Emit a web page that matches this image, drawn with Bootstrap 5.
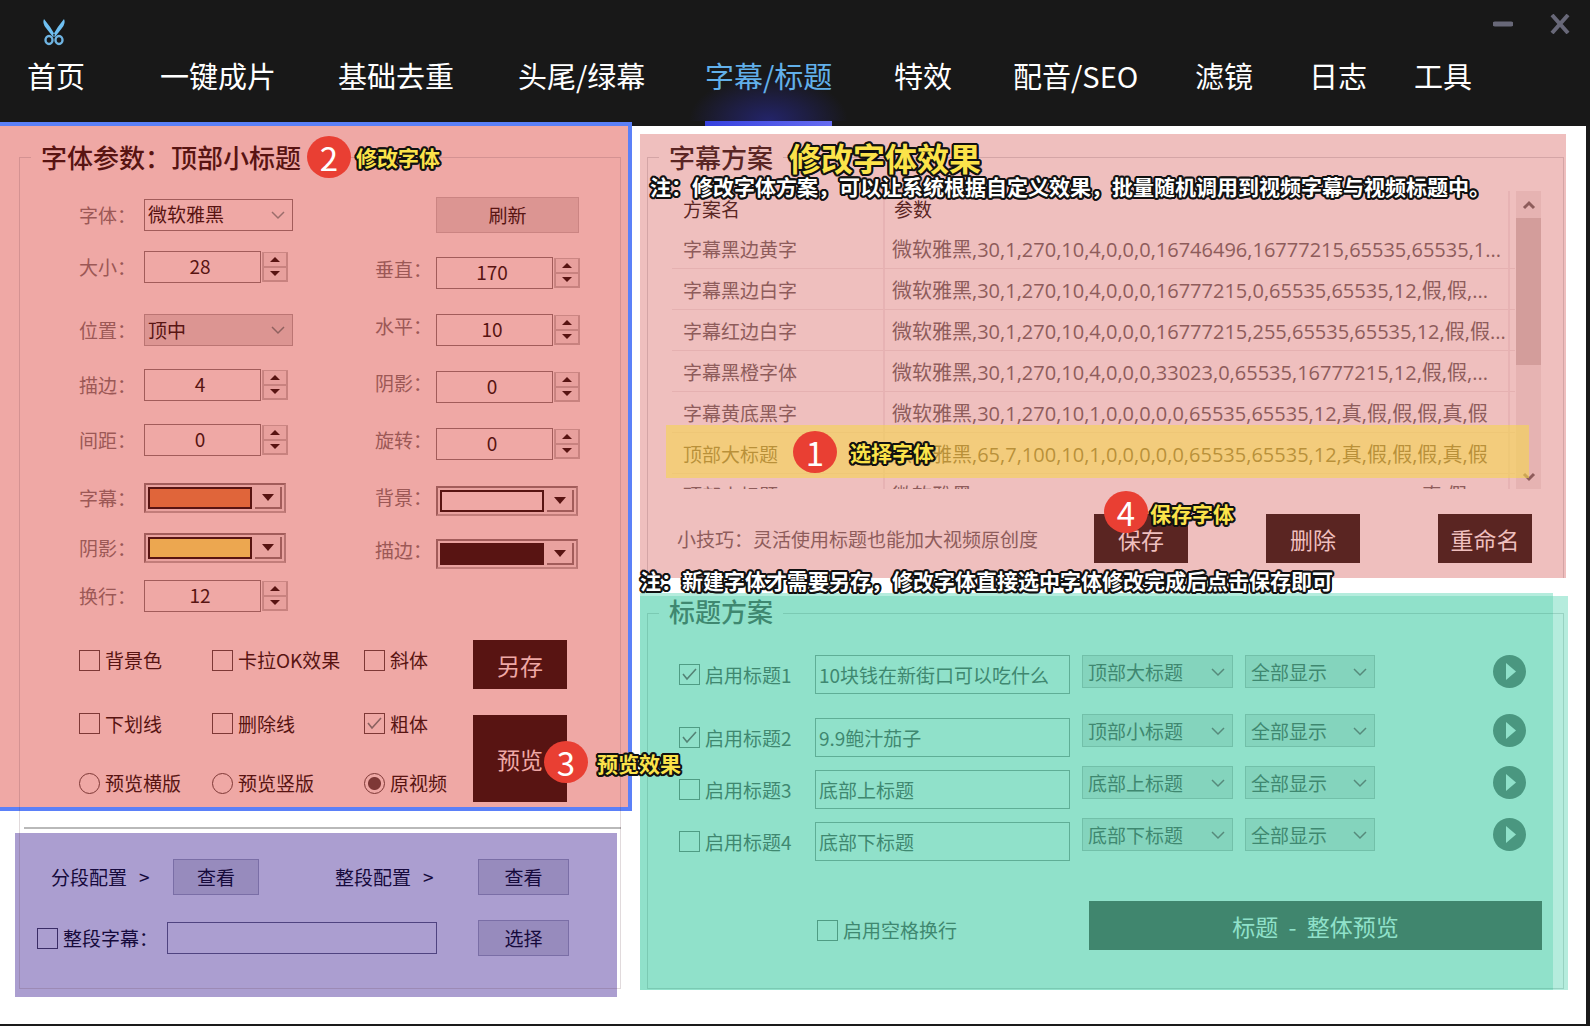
<!DOCTYPE html>
<html lang="zh-CN">
<head>
<meta charset="utf-8">
<meta name="viewport" content="width=device-width, initial-scale=1">
<title>字幕/标题</title>
<link href="https://cdn.jsdelivr.net/npm/bootstrap@5.3.0/dist/css/bootstrap.min.css" rel="stylesheet">
<style>
body{font-family:"Noto Sans CJK SC",sans-serif;font-size:19px;line-height:24px;background:#fff;color:#581412}
button,input,select{font-family:inherit;font-size:inherit;line-height:inherit;color:inherit}

/* title bar and tabs */
.topbar{background:#181818}
.titlebar{height:48px;padding:0 20px 0 42px}
.titlebar svg{display:block}
.win-btns{gap:37px}
.win-btn{border:0;background:none;padding:0}
.tabs{display:grid;grid-template-columns:133fr 178fr 180fr 187fr 189fr 119fr 182fr 114fr 105fr 176fr;padding-left:27px}
.tab-link{justify-self:start;height:78px;font-size:29px;line-height:54px;color:#fff;text-decoration:none;white-space:nowrap}
.tab-link.active{position:relative;isolation:isolate;color:#62b0ea;border-bottom:5px solid #4a52e6;border-image:linear-gradient(90deg,#3540dd,#666cf0) 1}
.tab-link.active::before{content:"";position:absolute;z-index:-1;left:-16px;right:-16px;bottom:0;height:46px;background:radial-gradient(ellipse 50% 100% at 50% 100%,#23246a 0,#1e1e42 50%,#181818 100%)}

/* window body */
.work{display:grid;grid-template-columns:632fr 954fr;border-right:4px solid #1a1a1a;border-bottom:2px solid #1a1a1a}
.pane-left,.pane-right,.zone{position:relative}
.pane-left{z-index:2}
.pane-left::before,.framed::before{content:"";position:absolute;border:1px solid rgba(90,50,60,.18);pointer-events:none}
.pane-left::before{left:19px;right:11px;top:31px;height:832px;z-index:1}
.zone-title{height:36px;font-size:26px;line-height:34px;font-weight:500;margin:0;position:relative;z-index:1;white-space:nowrap}
.zone-title b{font-weight:500;padding:0 10px;margin:0 -10px}

.zone-font{margin-top:-4px;background:#efa8a5;border:solid #5b80f8;border-width:4px 4px 4px 0;padding:13px 0 5px}
.zone-font .zone-title{padding-left:41px;gap:5px}
.zone-font .zone-title b{background:#efa8a5;margin-right:-9px}
.font-form{margin-top:24px;padding-left:79px;display:grid;grid-template-columns:296px 1fr}
.rows-a,.rows-b{display:grid;align-content:start}
.rows-a{grid-template-rows:52px 63px 55px 55px 58px 50px 48px 32px}
.rows-b{grid-template-rows:58px 57px 57px 57px 57px 53px 32px}
.field{display:flex;align-items:center;height:32px}
.field-name{width:65px;color:#9c5856}
.rows-b .field-name{width:61px;padding-bottom:8px}
.box,.pick{border:1px solid;outline:0;border-radius:0;min-width:0;padding:0 3px}
.box{background:transparent}
.pick{appearance:none;background-repeat:no-repeat;background-position:right 6px center;background-size:16px 16px;background-image:url("data:image/svg+xml,%3Csvg xmlns='http://www.w3.org/2000/svg' viewBox='0 0 16 16'%3E%3Cpath d='M2 5l6 6 6-6' fill='none' stroke='%23000' stroke-opacity='.35' stroke-width='1.5'/%3E%3C/svg%3E")}
.zone-font .box,.zone-font .pick{height:32px;border-color:#a25c5a}
.zone-font .pick{width:149px;background-color:transparent;padding-bottom:3px}
.zone-font .pick.dim{background-color:#dc9592;border-color:#bb7573;padding-bottom:0}
.zone-font .num{width:117px;text-align:center;padding:0 8px 3px 3px}
.spin{display:flex;flex-direction:column;width:26px;height:30px;margin-left:1px;border:solid #cb8683;border-width:1px 0 0 1px}
.spin button{flex:1;border:1px solid #c8827f;border-width:0 2px 2px 1px;background:#e8a09d;padding:0;display:flex;align-items:center;justify-content:center}
.tri-u,.tri-d{border:solid transparent;border-width:0 5px}
.tri-u{border-bottom:5px solid #581412}
.tri-d{border-top:5px solid #581412}
.color-pick{display:flex;width:142px;height:30px;padding:2px;background:#e9a29f;border:2px solid;border-color:#a25c5a #b87371 #c27d7a #a25c5a}
.color-pick>i{flex:1;border:2px solid #581412;margin-right:3px}
.color-pick span{width:27px;display:flex;align-items:center;justify-content:center;border:solid #a25c5a;border-width:0 2px 2px 0}
.color-pick .tri-d{border-width:7px 6px 0}
.sw-orange{background:#e0653a}.sw-amber{background:#eca750}.sw-none{background:#efa8a5}.sw-dark{background:#581412}
.flat{border:1px solid;padding:0}
.zone-font .flat{width:143px;height:36px;background:#dc9592;border-color:#cb8482}

.styles{margin-top:28px;padding-left:79px;display:flex}
.style-grid{display:grid;grid-template-columns:133px 152px 109px;grid-template-rows:40px 87px 32px;align-items:center}
.tick{display:flex;align-items:center;gap:5px;white-space:nowrap}
.tick input{appearance:none;flex:none;width:21px;height:21px;margin:0;border:1px solid #7e3836;border-radius:0;background:center/17px 17px no-repeat}
.tick input[type=radio]{border-radius:50%}
.tick input[type=radio]:checked{background:radial-gradient(circle,#7e3836 0 6px,transparent 7px)}
.tick input[type=checkbox]:checked{background-image:url("data:image/svg+xml,%3Csvg xmlns='http://www.w3.org/2000/svg' viewBox='0 0 17 17'%3E%3Cpath d='M2 8l4 5 9-10' fill='none' stroke='%23000' stroke-opacity='.42' stroke-width='1.6'/%3E%3C/svg%3E")}
.acts{display:flex;flex-direction:column;gap:26px;width:94px}
.solid{border:0;padding:0;font-size:23px;background:#581412;color:#efa8a5;height:49px;width:94px}
.acts .tall{height:87px}

.split{margin:16px 11px 4px 24px;border-top:2px solid #b9b9b9}
.zone-seg{margin:0 15px;height:164px;background:#ab9ed0;color:#160a3c;padding:26px 48px 0 22px}
.seg-row{display:flex;align-items:center;height:36px}
.seg-row + .seg-row{margin-top:25px}
.zone-seg .flat{background:#978bbd;border-color:#7a6ea6;height:36px;width:91px}
.zone-seg .flat.slim{width:86px}
.seg-a{width:122px;margin-left:14px}
.seg-b{width:143px;margin-left:76px}
.zone-seg .tick{width:130px}
.zone-seg .tick input{border-color:#3a2c66}
.zone-seg .box{flex:1;height:32px;border-color:#4f4380;margin-right:41px}

/* right pane */
.pane-right{padding:8px 18px 0 8px}
.framed::before{left:7px;right:2px}
.zone-plan{background:#efbfbe;color:#5a2624;margin-right:2px;padding:5px 25px 15px 32px}
.zone-plan.framed::before{top:23px;bottom:0;border-bottom:0}
.zone-plan .zone-title b{background:#efbfbe}
.zone-plan .zone-title,.zone-head .zone-title{margin-left:-3px}
.plan-list{position:relative;display:flex;height:298px;margin-top:16px}
.plan-scroll{flex:1;min-width:0;overflow:hidden}
.plan-table{width:100%;table-layout:fixed;border-collapse:separate;border-spacing:0;font-family:"Open Sans","Noto Sans CJK SC",sans-serif;color:#8e5c5b}
.plan-table th{height:37px;padding:0 0 0 11px;font-weight:400;font-size:19px;color:#5a2624}
.plan-table td{height:41px;padding:3px 0 0 11px;font-size:19px;white-space:nowrap;overflow:hidden;border-bottom:1px solid #e5b1b1}
.plan-table td + td{font-size:20px;padding-left:7px}
.plan-table th + th{padding-left:9px}
.plan-table th + th,.plan-table td + td{border-left:2px solid #e7b3b4}
.plan-table .is-picked{color:#5f2a18}
.c-name{width:211px}.c-end{width:7px}
.bar-track{width:25px;margin-left:1px;background:#e6b3b2;display:flex;flex-direction:column;align-items:center;padding:8px 0 6px}
.bar-thumb{width:100%;height:147px;margin:7px 0 auto;background:#d39d9b}
.picked{position:absolute;left:-6px;right:12px;top:234px;height:53px;background:rgba(245,214,80,.6)}
.plan-foot{display:flex;align-items:center;margin-top:25px;padding:0 9px 0 5px;color:#8e5c5b;white-space:nowrap}
.plan-foot .solid{background:#5a2522;color:#efbfbe}
.plan-btns{gap:78px}

.zone-head{margin-top:15px;padding:1px 26px 40px 32px;color:#3f8870;background:linear-gradient(#b5ecdd,#b5ecdd) 0 0/calc(100% - 15px) 3px no-repeat,linear-gradient(#90e1ca,#90e1ca) 0 3px/calc(100% - 15px) 100% no-repeat,linear-gradient(#b5ecdd,#b5ecdd) 100% 3px/15px 100% no-repeat}
.zone-head.framed::before{top:20px;bottom:1px;right:4px;border-color:rgba(40,110,90,.2)}
.zone-head .zone-title b{background:linear-gradient(#90e1ca,#90e1ca) 0 6px no-repeat}
.head-rows{margin:25px 16px 0 7px;display:grid;row-gap:13px}
.head-row{display:grid;grid-template-columns:124fr 255fr 151fr 130fr 139fr;column-gap:12px;align-items:start}
.head-row:first-child{margin-bottom:11px}
.head-row + .head-row .pick,.head-row + .head-row .play{margin-top:-4px}
.head-row .tick{height:39px}
.head-row .box{width:100%;height:39px;border-color:#5fae96}
.head-row .pick{width:100%;height:33px;background-color:#84d4bd;border-color:#72c0a9;padding:0 5px}
.zone-head .tick input{border-color:#4f9c84}
.play{justify-self:end;border:0;background:none;padding:0;height:33px}
.play svg{display:block}
.head-foot{display:flex;align-items:center;margin-top:40px;padding-left:145px}
.head-foot .tick{padding-top:9px}
.head-foot .solid{margin-left:auto;width:453px;background:#40866e;color:#90e1ca;white-space:pre}

/* numbered call-outs */
.pin{display:flex;align-items:center;justify-content:center;flex:none;width:44px;height:42px;border-radius:50%;background:#e93f33;color:#fff;font-size:33px;line-height:42px;font-weight:400}
.hint{font-size:21px;line-height:24px;font-weight:700;color:#fbe34a;white-space:nowrap;text-shadow:-2px 0 #111,2px 0 #111,0 -2px #111,0 2px #111,-1px -2px #111,1px -2px #111,-1px 2px #111,1px 2px #111,-2px -1px #111,2px -1px #111,-2px 1px #111,2px 1px #111}
.hint.big{font-size:32px;line-height:34px}
.hint.white{color:#fff}
.over{position:absolute;z-index:3;pointer-events:none}
.pin-1{left:121px;top:240px}.hint-1{left:178px;top:249px}
.pin-3{left:71px;top:26px}.hint-3{left:124px;top:36px}
.pin-4{left:10px;top:-23px}.hint-4{left:56px;top:-13px}
.note-1{left:10px;top:40px}.note-2{left:0;bottom:-14px}
</style>
</head>
<body class="min-vh-100 d-flex flex-column">
<header class="topbar">
  <div class="titlebar d-flex align-items-center">
    <svg width="24" height="28" viewBox="0 0 24 28" class="mt-3" role="img" aria-label="logo">
      <path d="M2 1Q0 5 4 10l7 9 2-2Q8 8 2 1zM22 1q2 4-2 9l-7 9-2-2q5-9 11-16z" fill="#6fc0f2"/>
      <ellipse cx="7" cy="22" rx="3.500" ry="4" fill="none" stroke="#6fb4e2" stroke-width="2.4"/>
      <ellipse cx="17" cy="22" rx="3.500" ry="4" fill="none" stroke="#6fb4e2" stroke-width="2.4"/>
    </svg>
    <div class="win-btns ms-auto d-flex align-items-center">
      <button class="win-btn" type="button" aria-label="最小化"><svg width="20" height="20" viewBox="0 0 20 20"><path d="M2 10h16" stroke="#686878" stroke-width="5" stroke-linecap="round"/></svg></button>
      <button class="win-btn" type="button" aria-label="关闭"><svg width="20" height="20" viewBox="0 0 20 20"><path d="M2 1l16 18M18 1L2 19" stroke="#686878" stroke-width="4"/></svg></button>
    </div>
  </div>
  <nav class="tabs">
    <a class="tab-link" href="#">首页</a><a class="tab-link" href="#">一键成片</a><a class="tab-link" href="#">基础去重</a><a class="tab-link" href="#">头尾/绿幕</a><a class="tab-link active" href="#" aria-current="page">字幕/标题</a><a class="tab-link" href="#">特效</a><a class="tab-link" href="#">配音/SEO</a><a class="tab-link" href="#">滤镜</a><a class="tab-link" href="#">日志</a><a class="tab-link" href="#">工具</a>
  </nav>
</header>

<main class="work flex-grow-1">
  <div class="pane-left">
    <section class="zone zone-font">
      <h2 class="zone-title d-flex align-items-center"><b>字体参数：顶部小标题</b><span class="pin">2</span><span class="hint">修改字体</span></h2>
      <div class="font-form">
        <div class="rows-a">
          <div class="field"><label class="field-name" for="f1">字体：</label><select class="pick" id="f1"><option>微软雅黑</option></select></div>
          <div class="field"><label class="field-name" for="f2">大小：</label><input class="box num" id="f2" value="28"><span class="spin"><button type="button" aria-label="增加"><i class="tri-u"></i></button><button type="button" aria-label="减少"><i class="tri-d"></i></button></span></div>
          <div class="field"><label class="field-name" for="f3">位置：</label><select class="pick dim" id="f3"><option>顶中</option></select></div>
          <div class="field"><label class="field-name" for="f4">描边：</label><input class="box num" id="f4" value="4"><span class="spin"><button type="button" aria-label="增加"><i class="tri-u"></i></button><button type="button" aria-label="减少"><i class="tri-d"></i></button></span></div>
          <div class="field"><label class="field-name" for="f5">间距：</label><input class="box num" id="f5" value="0"><span class="spin"><button type="button" aria-label="增加"><i class="tri-u"></i></button><button type="button" aria-label="减少"><i class="tri-d"></i></button></span></div>
          <div class="field"><label class="field-name" for="f6">字幕：</label><button type="button" class="color-pick" id="f6"><i class="sw-orange"></i><span><i class="tri-d"></i></span></button></div>
          <div class="field"><label class="field-name" for="f7">阴影：</label><button type="button" class="color-pick" id="f7"><i class="sw-amber"></i><span><i class="tri-d"></i></span></button></div>
          <div class="field"><label class="field-name" for="f8">换行：</label><input class="box num" id="f8" value="12"><span class="spin"><button type="button" aria-label="增加"><i class="tri-u"></i></button><button type="button" aria-label="减少"><i class="tri-d"></i></button></span></div>
        </div>
        <div class="rows-b">
          <div class="field"><span class="field-name"></span><button type="button" class="flat">刷新</button></div>
          <div class="field"><label class="field-name" for="g2">垂直：</label><input class="box num" id="g2" value="170"><span class="spin"><button type="button" aria-label="增加"><i class="tri-u"></i></button><button type="button" aria-label="减少"><i class="tri-d"></i></button></span></div>
          <div class="field"><label class="field-name" for="g3">水平：</label><input class="box num" id="g3" value="10"><span class="spin"><button type="button" aria-label="增加"><i class="tri-u"></i></button><button type="button" aria-label="减少"><i class="tri-d"></i></button></span></div>
          <div class="field"><label class="field-name" for="g4">阴影：</label><input class="box num" id="g4" value="0"><span class="spin"><button type="button" aria-label="增加"><i class="tri-u"></i></button><button type="button" aria-label="减少"><i class="tri-d"></i></button></span></div>
          <div class="field"><label class="field-name" for="g5">旋转：</label><input class="box num" id="g5" value="0"><span class="spin"><button type="button" aria-label="增加"><i class="tri-u"></i></button><button type="button" aria-label="减少"><i class="tri-d"></i></button></span></div>
          <div class="field"><label class="field-name" for="g6">背景：</label><button type="button" class="color-pick" id="g6"><i class="sw-none"></i><span><i class="tri-d"></i></span></button></div>
          <div class="field"><label class="field-name" for="g7">描边：</label><button type="button" class="color-pick" id="g7"><i class="sw-dark"></i><span><i class="tri-d"></i></span></button></div>
        </div>
      </div>
      <div class="styles">
        <div class="style-grid">
          <label class="tick"><input type="checkbox">背景色</label>
          <label class="tick"><input type="checkbox">卡拉OK效果</label>
          <label class="tick"><input type="checkbox">斜体</label>
          <label class="tick"><input type="checkbox">下划线</label>
          <label class="tick"><input type="checkbox">删除线</label>
          <label class="tick"><input type="checkbox" checked>粗体</label>
          <label class="tick"><input type="radio" name="view">预览横版</label>
          <label class="tick"><input type="radio" name="view">预览竖版</label>
          <label class="tick"><input type="radio" name="view" checked>原视频</label>
        </div>
        <div class="acts">
          <button type="button" class="solid">另存</button>
          <div class="position-relative">
            <button type="button" class="solid tall">预览</button>
            <span class="pin over pin-3">3</span><span class="hint over hint-3">预览效果</span>
          </div>
        </div>
      </div>
    </section>
    <div class="split"></div>
    <section class="zone zone-seg">
      <div class="seg-row"><span class="seg-a">分段配置<span class="ms-2 ps-1">&gt;</span></span><button type="button" class="flat slim">查看</button><span class="seg-b">整段配置<span class="ms-2 ps-1">&gt;</span></span><button type="button" class="flat">查看</button></div>
      <div class="seg-row"><label class="tick"><input type="checkbox">整段字幕：</label><input class="box" aria-label="整段字幕"><button type="button" class="flat">选择</button></div>
    </section>
  </div>

  <div class="pane-right">
    <section class="zone zone-plan framed">
      <h2 class="zone-title d-flex align-items-center"><b>字幕方案</b><span class="hint big ms-3">修改字体效果</span></h2>
      <div class="hint white over note-1">注：修改字体方案，可以让系统根据自定义效果，批量随机调用到视频字幕与视频标题中。</div>
      <div class="plan-list">
        <div class="plan-scroll">
          <table class="plan-table">
            <colgroup><col class="c-name"><col><col class="c-end"></colgroup>
            <thead><tr><th scope="col">方案名</th><th scope="col">参数</th><th></th></tr></thead>
            <tbody>
              <tr><td>字幕黑边黄字</td><td>微软雅黑,30,1,270,10,4,0,0,0,16746496,16777215,65535,65535,1...</td><td></td></tr>
              <tr><td>字幕黑边白字</td><td>微软雅黑,30,1,270,10,4,0,0,0,16777215,0,65535,65535,12,假,假,...</td><td></td></tr>
              <tr><td>字幕红边白字</td><td>微软雅黑,30,1,270,10,4,0,0,0,16777215,255,65535,65535,12,假,假...</td><td></td></tr>
              <tr><td>字幕黑橙字体</td><td>微软雅黑,30,1,270,10,4,0,0,0,33023,0,65535,16777215,12,假,假,...</td><td></td></tr>
              <tr><td>字幕黄底黑字</td><td>微软雅黑,30,1,270,10,1,0,0,0,0,0,65535,65535,12,真,假,假,假,真,假</td><td></td></tr>
              <tr class="is-picked"><td>顶部大标题</td><td>微软雅黑,65,7,100,10,1,0,0,0,0,0,65535,65535,12,真,假,假,假,真,假</td><td></td></tr>
              <tr><td>顶部小标题2</td><td>微软雅黑,65,7,100,10,1,0,0,0,33023,0,65535,16711680,12,真,假</td><td></td></tr>
            </tbody>
          </table>
        </div>
        <div class="bar-track">
          <svg width="14" height="12" viewBox="0 0 14 12"><path d="M2 9l5-5 5 5" fill="none" stroke="#8e5c5b" stroke-width="3"/></svg>
          <div class="bar-thumb"></div>
          <svg width="14" height="12" viewBox="0 0 14 12"><path d="M2 3l5 5 5-5" fill="none" stroke="#8e5c5b" stroke-width="3"/></svg>
        </div>
        <div class="picked over"></div>
        <span class="pin over pin-1">1</span><span class="hint over hint-1">选择字体</span>
      </div>
      <div class="plan-foot">
        <span>小技巧：灵活使用标题也能加大视频原创度</span>
        <div class="plan-btns d-flex ms-auto">
          <div class="position-relative"><button type="button" class="solid">保存</button><span class="pin over pin-4">4</span><span class="hint over hint-4">保存字体</span></div>
          <button type="button" class="solid">删除</button>
          <button type="button" class="solid">重命名</button>
        </div>
      </div>
      <div class="hint white over note-2">注：新建字体才需要另存，修改字体直接选中字体修改完成后点击保存即可</div>
    </section>

    <section class="zone zone-head framed">
      <h2 class="zone-title"><b>标题方案</b></h2>
      <div class="head-rows">
        <div class="head-row"><label class="tick"><input type="checkbox" checked>启用标题1</label><input class="box" aria-label="标题1" value="10块钱在新街口可以吃什么"><select class="pick" aria-label="标题1位置"><option>顶部大标题</option></select><select class="pick" aria-label="标题1显示"><option>全部显示</option></select><button type="button" class="play" aria-label="播放1"><svg width="33" height="33" viewBox="0 0 33 33"><circle cx="16.500" cy="16.500" r="16.500" fill="#4a9780"/><path d="M13 8l10 8.500L13 25z" fill="#90e1ca"/></svg></button></div>
        <div class="head-row"><label class="tick"><input type="checkbox" checked>启用标题2</label><input class="box" aria-label="标题2" value="9.9鲍汁茄子"><select class="pick" aria-label="标题2位置"><option>顶部小标题</option></select><select class="pick" aria-label="标题2显示"><option>全部显示</option></select><button type="button" class="play" aria-label="播放2"><svg width="33" height="33" viewBox="0 0 33 33"><circle cx="16.500" cy="16.500" r="16.500" fill="#4a9780"/><path d="M13 8l10 8.500L13 25z" fill="#90e1ca"/></svg></button></div>
        <div class="head-row"><label class="tick"><input type="checkbox">启用标题3</label><input class="box" aria-label="标题3" value="底部上标题"><select class="pick" aria-label="标题3位置"><option>底部上标题</option></select><select class="pick" aria-label="标题3显示"><option>全部显示</option></select><button type="button" class="play" aria-label="播放3"><svg width="33" height="33" viewBox="0 0 33 33"><circle cx="16.500" cy="16.500" r="16.500" fill="#4a9780"/><path d="M13 8l10 8.500L13 25z" fill="#90e1ca"/></svg></button></div>
        <div class="head-row"><label class="tick"><input type="checkbox">启用标题4</label><input class="box" aria-label="标题4" value="底部下标题"><select class="pick" aria-label="标题4位置"><option>底部下标题</option></select><select class="pick" aria-label="标题4显示"><option>全部显示</option></select><button type="button" class="play" aria-label="播放4"><svg width="33" height="33" viewBox="0 0 33 33"><circle cx="16.500" cy="16.500" r="16.500" fill="#4a9780"/><path d="M13 8l10 8.500L13 25z" fill="#90e1ca"/></svg></button></div>
      </div>
      <div class="head-foot">
        <label class="tick"><input type="checkbox">启用空格换行</label>
        <button type="button" class="solid">标题  -  整体预览</button>
      </div>
    </section>
  </div>
</main>
<script src="https://cdn.jsdelivr.net/npm/bootstrap@5.3.0/dist/js/bootstrap.bundle.min.js"></script>
</body>
</html>
